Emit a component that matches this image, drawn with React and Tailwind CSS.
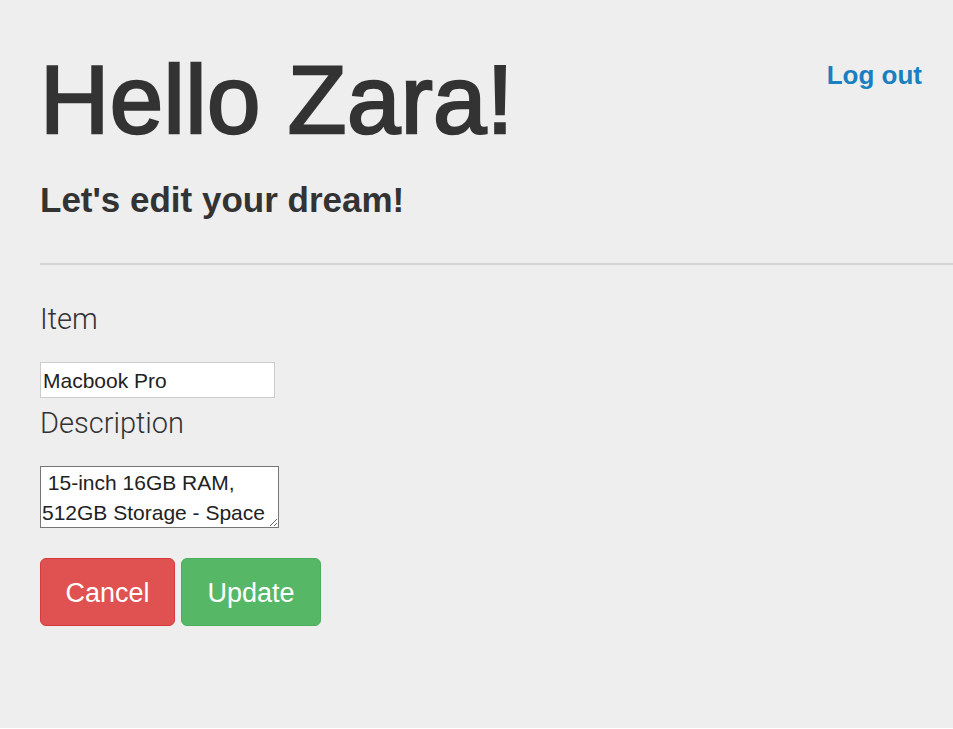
export default function App() {
  return (
    <div className="min-h-[728px] bg-[#eeeeee] font-['Liberation_Sans',Arial,sans-serif] text-[#333333]">
      <div className="flex items-start justify-between pl-10 pr-[31px]">
        <h1 className="mt-[47px] text-[96px] leading-[106px] font-normal tracking-[0.4px] [-webkit-text-stroke:2.5px_#333333]">
          Hello Zara!
        </h1>
        <a href="#" className="mt-[60px] text-[26px] leading-[30px] font-bold text-[#1a7fc0] no-underline">
          Log out
        </a>
      </div>
      <h2 className="ml-10 mt-[27px] text-[35px] leading-[40px] font-bold">Let's edit your dream!</h2>
      <div className="ml-10 mt-[43px] h-[2px] bg-[#d5d5d5]" />
      <form className="pl-10 flex flex-col items-start" onSubmit={(e) => e.preventDefault()}>
        <label className="mt-[38px] font-['Roboto',sans-serif] font-light text-[29px] leading-[32px] text-[#333]">
          Item
        </label>
        <input
          type="text"
          defaultValue="Macbook Pro"
          className="mt-[27px] w-[235px] h-[36px] border border-[#cccccc] bg-white pl-[2px] pt-[1px] text-[21px] text-[#222] outline-none"
        />
        <label className="mt-[9px] font-['Roboto',sans-serif] font-light text-[29px] leading-[32px] text-[#333]">
          Description
        </label>
        <textarea
          defaultValue=" 15-inch 16GB RAM, 512GB Storage - Space Gray"
          className="mt-[27px] w-[239px] h-[62px] border border-[#767676] bg-white pl-[1px] pr-[4px] pt-[1px] text-[21px] leading-[30px] text-[#222] overflow-hidden outline-none resize"
        />
        <div className="mt-[30px] flex gap-[6px]">
          <button
            type="button"
            className="h-[68px] w-[135px] rounded-[6px] border border-[#d8393b] bg-[#e05252] pt-[2px] text-[27px] text-white"
          >
            Cancel
          </button>
          <button
            type="button"
            className="h-[68px] w-[140px] rounded-[6px] border border-[#4cae5c] bg-[#56b866] pt-[2px] text-[27px] text-white"
          >
            Update
          </button>
        </div>
      </form>
    </div>
  );
}
